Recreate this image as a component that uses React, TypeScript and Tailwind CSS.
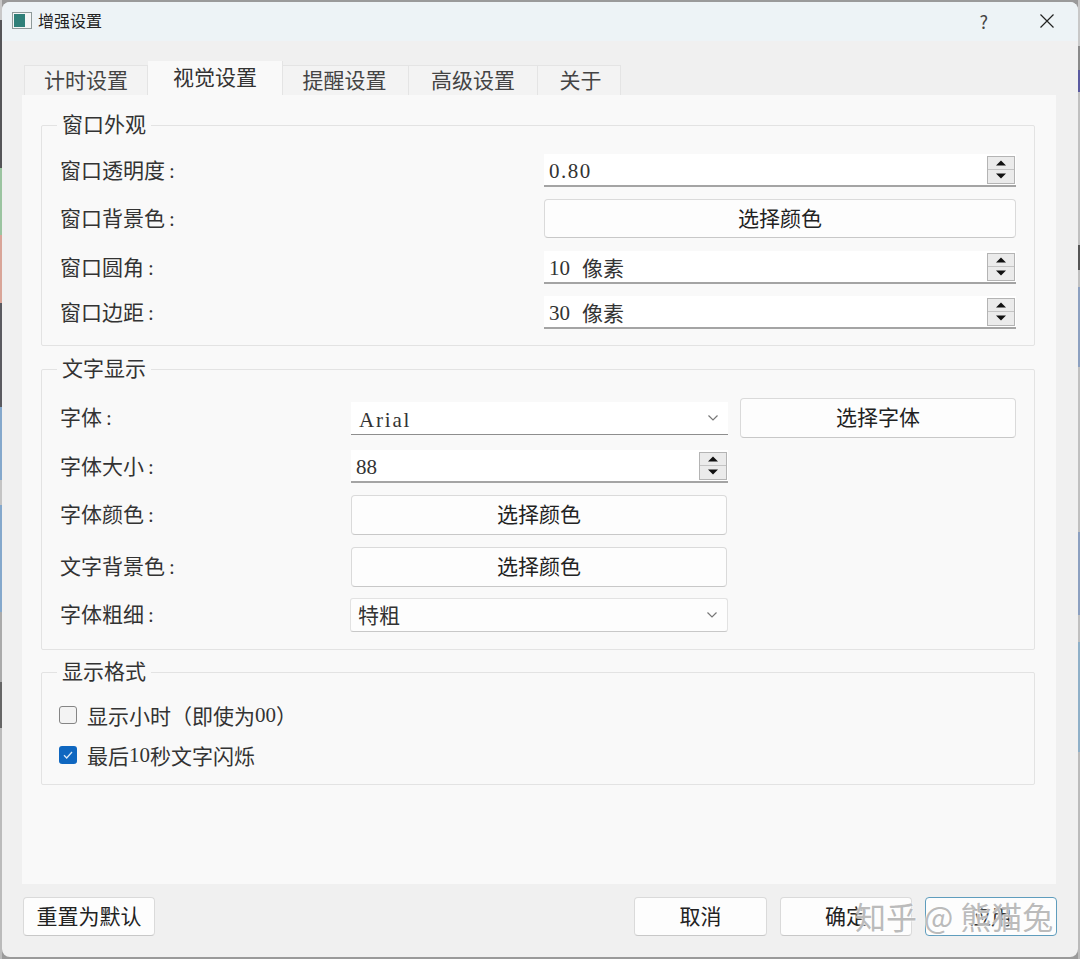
import type { ReactNode } from "react";

const cjk = "font-['Noto_Sans_CJK_SC','Liberation_Sans',sans-serif]";
const latin = "font-['Liberation_Serif','Noto_Sans_CJK_SC',serif]";

const Triangle = ({ down }: { down?: boolean }) => (
  <svg width="12" height="6" viewBox="0 0 12 6" className="block">
    <path d={down ? "M1 0.5h10L6 5.5z" : "M1 5.5h10L6 0.5z"} fill="#111" />
  </svg>
);

const Spin = ({ value, width, unit, tracking }: { value: string; width: string; unit?: string; tracking?: string }) => (
  <div className={`flex h-[33px] items-center justify-between border-b-2 border-[#a4a4a4] bg-white pl-[5px] pr-[1px] ${width}`}>
    <span className="flex items-center text-[#333]">
      <span className={`${latin} pt-[4px] ${tracking ?? ""}`}>{value}</span>
      {unit && <span className="ml-[12px] pt-[2px]">{unit}</span>}
    </span>
    <div className="flex h-[28px] w-[28px] flex-col border border-[#b4b4b4] bg-[#ebebeb]">
      <div className="flex h-[13px] items-center justify-center border-b border-[#c4c4c4]">
        <Triangle />
      </div>
      <div className="flex flex-1 items-center justify-center">
        <Triangle down />
      </div>
    </div>
  </div>
);

const Btn = ({ label, className }: { label: string; className: string }) => (
  <div className={`flex items-center justify-center rounded-[4px] border border-[#dadada] border-b-[#c8c8c8] bg-[#fdfdfd] pb-[3px] text-[#222] ${className}`}>
    {label}
  </div>
);

const Combo = ({ children, underline }: { children: ReactNode; underline?: boolean }) => (
  <div
    className={`flex items-center justify-between pl-[7px] pr-[9px] ${
      underline
        ? "h-[33px] w-[377px] border-b border-[#8e8e8e] bg-white"
        : "-ml-px h-[34px] w-[378px] rounded-[3px] border border-[#e2e2e2] border-b-[#c8c8c8] bg-[#fdfdfd]"
    }`}
  >
    {children}
    <svg width="12" height="8" viewBox="0 0 12 8">
      <path d="M1.5 1.5 6 6l4.5-4.5" fill="none" stroke="#777" strokeWidth="1.2" />
    </svg>
  </div>
);

const Row = ({ label, labelWidth, className, children }: { label: string; labelWidth: string; className?: string; children: ReactNode }) => (
  <div className={`flex items-center ${className ?? ""}`}>
    <span className={`shrink-0 pb-[1px] text-[#333] ${labelWidth}`}>
      {label}
      <span className={`${latin} ml-[4px]`}>:</span>
    </span>
    {children}
  </div>
);

const Group = ({ title, className, children }: { title: string; className: string; children: ReactNode }) => (
  <div className={`rounded-[2px] border border-[#e3e3e3] pl-[18px] ${className}`}>
    <div className="-ml-[3px] -mt-[15px] mb-[14px] h-[29px] w-fit bg-[#f9f9f9] px-[5px] leading-[25px] text-[#333]">{title}</div>
    {children}
  </div>
);

const Check = ({ label, checked, className }: { label: ReactNode; checked?: boolean; className?: string }) => (
  <div className={`-ml-px flex h-[20px] items-center ${className ?? ""}`}>
    {checked ? (
      <div className="flex h-[18px] w-[18px] items-center justify-center rounded-[3px] bg-[#0f67c0]">
        <svg width="12" height="10" viewBox="0 0 12 10">
          <path d="M2 5.2 4.7 8 10 2" fill="none" stroke="#dbe9f7" strokeWidth="1.3" />
        </svg>
      </div>
    ) : (
      <div className="h-[18px] w-[18px] rounded-[3px] border border-[#858585] bg-[#f3f3f3]" />
    )}
    <span className="ml-[10px] flex items-center text-[#333]">{label}</span>
  </div>
);

const Tab = ({ label, active, className }: { label: string; active?: boolean; className: string }) => (
  <div
    className={`flex items-center justify-center border-r border-[#e4e4e4] pb-[3px] ${
      active ? "h-[34px] bg-[#f9f9f9] text-[#333]" : "h-[30px] border-t bg-[#f3f3f3] text-[#444]"
    } ${className}`}
  >
    {label}
  </div>
);

export default function App() {
  return (
    <div className={`flex h-[959px] w-[1080px] overflow-hidden bg-[#9a9a9a] text-[21px] leading-none ${cjk}`}>
      {/* desktop showing behind the window, left edge */}
      <div className="h-full w-[2px] shrink-0 bg-[linear-gradient(to_bottom,#c8c8c8_0,#c8c8c8_20px,#555558_20px,#555558_168px,#9bc4a0_168px,#9bc4a0_235px,#d9a598_235px,#d9a598_303px,#5a5a60_303px,#5a5a60_407px,#84a8cc_407px,#84a8cc_480px,#c4c4c4_480px,#c4c4c4_505px,#84a8cc_505px,#84a8cc_612px,#aaaaaa_612px,#aaaaaa_682px,#666666_682px,#666666_728px,#bbbbbb_728px,#bbbbbb_959px)]" />

      <div className="relative mt-[2px] flex h-[955px] w-[1076px] shrink-0 flex-col rounded-[8px] bg-[#f0f0f0]">
        {/* title bar */}
        <div className="flex h-[39px] shrink-0 items-center rounded-t-[8px] bg-[#edf3f6] pb-[2px] pl-[10px] pr-[23px]">
          <div className="-mt-px flex h-[17px] w-[20px] border border-[#8e9a9a] bg-[#f4f6f6] p-[1px]">
            <div className="w-[11px] bg-[#2f8079]" />
          </div>
          <span className="-mt-px ml-[6px] text-[16px] text-[#222]">增强设置</span>
          <span className="ml-auto text-[18px] text-[#444]">?</span>
          <svg width="16" height="16" viewBox="0 0 16 16" className="ml-[51px]">
            <path d="M1.5 1.5l13 13M14.5 1.5l-13 13" stroke="#222" strokeWidth="1.2" />
          </svg>
        </div>

        {/* tabs */}
        <div className="ml-[22px] mt-[20px] flex h-[34px] items-end">
          <Tab label="计时设置" className="w-[124px] border-l" />
          <Tab label="视觉设置" active className="w-[135px]" />
          <Tab label="提醒设置" className="w-[126px] pr-[2px]" />
          <Tab label="高级设置" className="w-[129px]" />
          <Tab label="关于" className="w-[83px] pl-[3px]" />
        </div>

        {/* page */}
        <div className="ml-[20px] mr-[22px] h-[789px] bg-[#f9f9f9] pl-[19px] pr-[21px] pt-[30px]">
          <Group title="窗口外观" className="h-[221px]">
            <Row label="窗口透明度" labelWidth="w-[484px]">
              <Spin value="0.80" tracking="tracking-[1.5px]" width="w-[472px]" />
            </Row>
            <Row label="窗口背景色" labelWidth="w-[484px]" className="mt-[12px]">
              <Btn label="选择颜色" className="h-[39px] w-[472px]" />
            </Row>
            <Row label="窗口圆角" labelWidth="w-[484px]" className="mt-[13px]">
              <Spin value="10" unit="像素" width="w-[472px]" />
            </Row>
            <Row label="窗口边距" labelWidth="w-[484px]" className="mt-[12px]">
              <Spin value="30" unit="像素" width="w-[472px]" />
            </Row>
          </Group>

          <Group title="文字显示" className="mt-[23px] h-[281px]">
            <Row label="字体" labelWidth="w-[291px]">
              <Combo underline>
                <span className={`${latin} pl-[1px] pt-[5px] tracking-[1.8px] text-[#333]`}>Arial</span>
              </Combo>
              <Btn label="选择字体" className="ml-[12px] h-[40px] w-[276px]" />
            </Row>
            <Row label="字体大小" labelWidth="w-[291px]" className="mt-[12px]">
              <Spin value="88" width="w-[377px]" />
            </Row>
            <Row label="字体颜色" labelWidth="w-[291px]" className="mt-[12px]">
              <Btn label="选择颜色" className="h-[40px] w-[376px]" />
            </Row>
            <Row label="文字背景色" labelWidth="w-[291px]" className="mt-[12px]">
              <Btn label="选择颜色" className="h-[40px] w-[376px]" />
            </Row>
            <Row label="字体粗细" labelWidth="w-[291px]" className="mt-[11px]">
              <Combo>
                <span className="pb-[2px] text-[#333]">特粗</span>
              </Combo>
            </Row>
          </Group>

          <Group title="显示格式" className="mt-[22px] h-[113px]">
            <Check
              className="mt-[18px]"
              label={
                <>
                  显示小时（即使为<span className={latin}>00</span>）
                </>
              }
            />
            <Check
              checked
              className="mt-[20px]"
              label={
                <>
                  最后<span className={latin}>10</span>秒文字闪烁
                </>
              }
            />
          </Group>
        </div>

        {/* bottom buttons */}
        <div className="mt-[13px] flex px-[21px]">
          <Btn label="重置为默认" className="h-[39px] w-[132px]" />
          <Btn label="取消" className="ml-auto h-[39px] w-[133px]" />
          <Btn label="确定" className="ml-[13px] h-[39px] w-[132px]" />
          <Btn label="应用" className="ml-[13px] h-[39px] w-[132px] !border-[#5f9dbd]" />
        </div>

        {/* watermark */}
        <div className="absolute left-[853px] top-[896px] whitespace-nowrap text-[31px] leading-[36px] text-[#a9a9a9]/80 [text-shadow:0_0_2px_#fff,0_0_2px_#fff]">
          知乎 <span className="mr-[7px]">@</span>熊猫兔
        </div>
      </div>

      {/* desktop showing behind the window, right edge */}
      <div className="h-full w-[2px] shrink-0 bg-[linear-gradient(to_bottom,#c8c8c8_0,#c8c8c8_46px,#8a8a8a_46px,#8a8a8a_70px,#5a5aa0_70px,#5a5aa0_92px,#c0c0c0_92px,#c0c0c0_245px,#555555_245px,#555555_270px,#c0c0c0_270px,#c0c0c0_287px,#8ca0c0_287px,#8ca0c0_367px,#c0c0c0_367px,#c0c0c0_532px,#8ca0c0_532px,#8ca0c0_615px,#c0c0c0_615px,#c0c0c0_642px,#8fb0c8_642px,#8fb0c8_752px,#bbbbbb_752px,#bbbbbb_959px)]" />
    </div>
  );
}
